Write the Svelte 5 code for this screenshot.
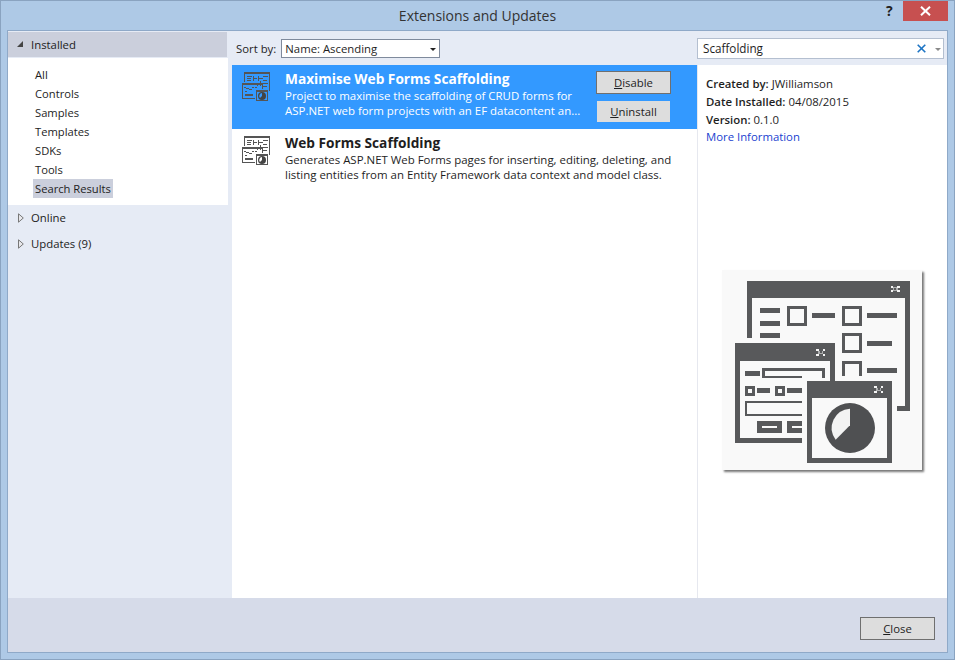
<script>
  const nav = ['All', 'Controls', 'Samples', 'Templates', 'SDKs', 'Tools', 'Search Results'];
  const smallDark = [
    [6,4,26,2],[6,4,1,10],[31,4,1,19],
    [9,8,5,1],[9,10,4,1],[9,12,4,1],[15,8,1,5],[15,10,4,1],[20,8,1,5],[21,10,4,1],[25,8,5,1],[25,12,4,1],[22,13,1,5],[19,15,1,3],[25,15,5,1],[25,18,4,1],
    [4,15,21,2],[4,15,1,16],[4,30,13,1],[24,15,1,6],
    [6,19,2,1],[8,20,3,1],[11,21,3,1],[7,23,2,1],[7,26,8,2],[14,19,2,1],[17,19,2,1],
    [18,22,12,2],[18,22,1,11],[18,32,12,1],[29,22,1,11]
  ];
</script>

{#snippet rowIcon(wedge)}
  <svg class="row-icon" width="36" height="36" viewBox="0 0 36 36" shape-rendering="crispEdges">
    {#each smallDark as r}<rect x={r[0]} y={r[1]} width={r[2]} height={r[3]} fill="#555"/>{/each}
    <circle cx="24" cy="28" r="4" fill="#444" shape-rendering="auto"/>
    <path d="M24 25A3 3 0 0 0 22 30L24 28Z" fill={wedge} shape-rendering="auto"/>
  </svg>
{/snippet}

{#snippet tinyX(x, y)}
  <g transform="translate({x} {y})" fill="#f4f4f4">
    <rect x="0" y="0" width="8" height="6"/><rect x="20" y="0" width="8" height="6"/>
    <rect x="0" y="14" width="8" height="6"/><rect x="20" y="14" width="8" height="6"/>
    <rect x="6" y="5" width="16" height="10" opacity=".55"/>
    <rect x="11" y="7" width="6" height="6" fill="#58595b"/>
  </g>
{/snippet}

{#snippet triClosed()}
  <svg class="tri" width="6" height="10" viewBox="0 0 6 10"><path d="M.5 .8L5.3 5L.5 9.2Z" fill="#e8e8ec" stroke="#777"/></svg>
{/snippet}

<div class="window">
  <header class="titlebar">
    <h1>Extensions and Updates</h1>
    <span class="help">?</span>
    <span class="close-x">
      <svg width="11" height="10" viewBox="0 0 11 10"><path d="M1 .7l9 8.6M10 .7l-9 8.6" stroke="#fff" stroke-width="2"/></svg>
    </span>
  </header>

  <div class="panel">
    <div class="body">
      <aside class="sidebar">
        <div class="section-head open"><i class="tri-open"></i>Installed</div>
        <ul class="nav">
          {#each nav as item}
            <li><span class:active={item === 'Search Results'}>{item}</span></li>
          {/each}
        </ul>
        <div class="section-head first">{@render triClosed()}Online</div>
        <div class="section-head second">{@render triClosed()}Updates (9)</div>
      </aside>

      <div class="content">
        <div class="toolbar">
          <div class="sort">
            <label for="sortbox">Sort by:</label>
            <div class="select" id="sortbox">Name: Ascending<i class="caret"></i></div>
          </div>
          <div class="search">
            <span class="search-text">Scaffolding</span>
            <svg class="search-x" width="9" height="9" viewBox="0 0 9 9"><path d="M.7.7l7.6 7.6M8.3.7L.7 8.3" stroke="#1c74c4" stroke-width="1.6"/></svg>
            <i class="caret grey"></i>
          </div>
        </div>

        <div class="columns">
          <div class="list">
            <div class="row selected">
              {@render rowIcon('#3399ff')}
              <div class="row-text">
                <div class="row-title">Maximise Web Forms Scaffolding</div>
                <div class="row-desc">Project to maximise the scaffolding of CRUD forms for<br/>ASP.NET web form projects with an EF datacontent an...</div>
              </div>
              <div class="row-actions">
                <button class="btn focus"><u>D</u>isable</button>
                <button class="btn"><u>U</u>ninstall</button>
              </div>
            </div>
            <div class="row">
              {@render rowIcon('#fff')}
              <div class="row-text">
                <div class="row-title">Web Forms Scaffolding</div>
                <div class="row-desc">Generates ASP.NET Web Forms pages for inserting, editing, deleting, and<br/>listing entities from an Entity Framework data context and model class.</div>
              </div>
            </div>
          </div>

          <section class="details">
            <p><b>Created by:</b> JWilliamson</p>
            <p><b>Date Installed:</b> 04/08/2015</p>
            <p><b>Version:</b> 0.1.0</p>
            <p class="link">More Information</p>
            <div class="preview">
              <svg width="200" height="200" viewBox="21 15 600 600" shape-rendering="crispEdges">
                <g fill="#58595b">
                  <path fill-rule="evenodd" d="M96 48H585V437H546V422H570V98H111V218H96Z"/>
                  <rect x="135" y="129" width="60" height="14"/><rect x="135" y="168" width="60" height="15"/><rect x="135" y="204" width="60" height="14"/>
                  <path fill-rule="evenodd" d="M216 123H276V183H216ZM224 131V175H268V131Z"/>
                  <rect x="291" y="144" width="69" height="15"/>
                  <path fill-rule="evenodd" d="M381 123H441V183H381ZM389 131V175H433V131Z"/>
                  <rect x="456" y="144" width="90" height="15"/>
                  <path fill-rule="evenodd" d="M381 204H441V264H381ZM389 212V256H433V212Z"/>
                  <rect x="456" y="228" width="75" height="15"/>
                  <path d="M381 288H441V333H433V296H389V333H381Z"/>
                  <rect x="456" y="309" width="90" height="15"/>

                  <path fill-rule="evenodd" d="M60 234H360V348H345V288H75V519H261V534H60Z"/>
                  <rect x="90" y="318" width="45" height="15"/>
                  <path d="M141 309H330V339H322V317H149V333H261V339H141Z"/>
                  <path fill-rule="evenodd" d="M90 363H120V393H90ZM98 371V385H112V371Z"/>
                  <rect x="126" y="370" width="39" height="15"/>
                  <path fill-rule="evenodd" d="M180 363H210V393H180ZM188 371V385H202V371Z"/>
                  <rect x="216" y="370" width="45" height="15"/>
                  <path d="M90 408H261V414H96V447H261V453H90Z"/>
                  <path fill-rule="evenodd" d="M126 468H201V504H126ZM141 483V489H186V483Z"/>
                  <path fill-rule="evenodd" d="M216 468H261V504H216ZM231 483V489H261V483Z"/>

                  <path fill-rule="evenodd" d="M276 348H531V594H276ZM291 399V579H516V399Z"/>
                </g>
                <g shape-rendering="auto">
                  <circle cx="405" cy="489" r="75" fill="#4f5052"/>
                  <path d="M405 431A58 58 0 0 0 362 524L405 481Z" fill="#f3f3f3"/>
                </g>
                {@render tinyX(527, 62)}
                {@render tinyX(303, 252)}
                {@render tinyX(477, 363)}
              </svg>
            </div>
          </section>
        </div>
      </div>
    </div>

    <footer class="footer">
      <button class="btn close-btn"><u>C</u>lose</button>
    </footer>
  </div>
</div>

<style>
  :global(body) { margin: 0; }
  .window {
    width: 955px; height: 660px; box-sizing: border-box;
    background: #aec9e6; border: 1px solid #8aa3c0;
    display: flex; flex-direction: column; overflow: hidden;
    font-family: "Open Sans", "Noto Sans", sans-serif;
    font-size: 11.35px; color: #1e1e1e;
  }
  .titlebar {
    height: 29px; flex: none; display: flex; align-items: center; position: relative;
    justify-content: center;
  }
  h1 { margin: 0; font-size: 14px; font-weight: 400; color: #333; }
  .help { position: absolute; left: 885px; top: 0; font-weight: 700; font-size: 14px; color: #222; }
  .close-x {
    position: absolute; left: 902px; top: 0; width: 45px; height: 20px;
    background: #c75050; display: flex; align-items: center; justify-content: center;
  }
  .panel {
    flex: 1; margin: 0 6px 6px 6px; border: 1px solid #8fa9c8;
    display: flex; flex-direction: column; min-height: 0; background: #e6ebf5;
  }
  .body { flex: 1; display: flex; min-height: 0; }
  .sidebar { width: 220px; flex: none; padding-top: 1px; }
  .section-head {
    height: 27px; display: flex; align-items: center; padding-left: 10px; gap: 7px;
    color: #222; box-sizing: border-box;
  }
  .section-head.open { height: 25px; background: #cbcfdc; margin-right: 1px; padding-left: 9px; padding-bottom: 1px; }
  .tri-open {
    width: 0; height: 0; border-left: 6px solid transparent; border-bottom: 6px solid #444;
    margin-right: 1px;
  }
  .tri { flex: none; }
  .nav {
    list-style: none; margin: 1px 0 -1px; padding: 7px 0 7px 25px; background: #fff; font-size: 11.2px;
  }
  .nav li { height: 19px; line-height: 19px; }
  .nav span { display: inline-block; padding: 0 2px; }
  .nav .active { background: #cbcfdc; }
  .section-head.first { height: 25px; margin-top: 1px; }
  .section-head.second { height: 29px; padding-bottom: 2px; }

  .content { flex: 1; min-width: 0; display: flex; flex-direction: column; padding-left: 4px; }
  .toolbar {
    height: 34px; flex: none; display: flex; align-items: center; justify-content: space-between;
    padding: 0 3px 0 4px; box-sizing: border-box;
  }
  .sort { display: flex; align-items: center; gap: 5px; }
  .select {
    width: 159px; height: 19px; box-sizing: border-box; border: 1px solid #7f8a9c; background: #fff;
    padding-left: 3px; line-height: 17px; position: relative;
  }
  .caret {
    position: absolute; right: 3px; top: 8px; width: 0; height: 0;
    border-left: 3px solid transparent; border-right: 3px solid transparent; border-top: 3px solid #222;
  }
  .caret.grey { border-top-color: #8a8a8a; right: 2px; top: 9px; }
  .search {
    width: 247px; height: 21px; box-sizing: border-box; border: 1px solid #b4bfd0; background: #fff;
    position: relative; padding-left: 5px; line-height: 19px; font-size: 11.7px;
  }
  .search-x { position: absolute; right: 17px; top: 5px; }

  .columns { flex: 1; display: flex; min-height: 0; background: #fff; }
  .list { width: 465px; flex: none; border-right: 1px solid #e6e8ef; }
  .row { height: 64px; display: flex; box-sizing: border-box; padding: 3px 0 0 6px; position: relative; }
  .row.selected { background: #3399ff; color: #fff; }
  .row-icon { flex: none; margin-right: 11px; }
  .row-text { flex: 1; min-width: 0; padding-top: 1px; }
  .row-title { font-weight: 700; font-size: 13.7px; line-height: 19px; }
  .row-desc { line-height: 15px; font-size: 11.45px; white-space: nowrap; }
  .row-actions {
    position: absolute; right: 26px; top: 6px; display: flex; flex-direction: column; gap: 7px;
  }
  .btn {
    width: 75px; height: 23px; box-sizing: border-box; margin: 0; padding: 0;
    background: #dddddd; border: 1px solid #dddddd; color: #1e1e1e;
    font: inherit; line-height: 19px; text-align: center;
  }
  .btn.focus { border-color: #6f6f6f; }
  .row-actions .btn:not(.focus) { width: 73px; height: 21px; margin-left: 1px; }

  .details { flex: 1; min-width: 0; padding: 10px 0 0 8px; display: flex; flex-direction: column; position: relative; font-size: 11.4px; }
  .details p { margin: 0; line-height: 17.8px; }
  .details b { font-weight: 600; }
  .link { color: #1a3fd0; font-size: 11.35px; }
  .preview {
    width: 200px; height: 200px; background: #f9f9f9; position: absolute; left: 24px; top: 205px;
    box-shadow: 2px 2px 2px #777;
  }
  .preview svg { display: block; filter: blur(.35px); }

  .footer {
    height: 54px; flex: none; background: #d6dbe9; display: flex; align-items: flex-start;
    justify-content: flex-end; padding: 19px 12px 0 0; box-sizing: border-box;
  }
  .close-btn { border-color: #6f6f6f; }
</style>
